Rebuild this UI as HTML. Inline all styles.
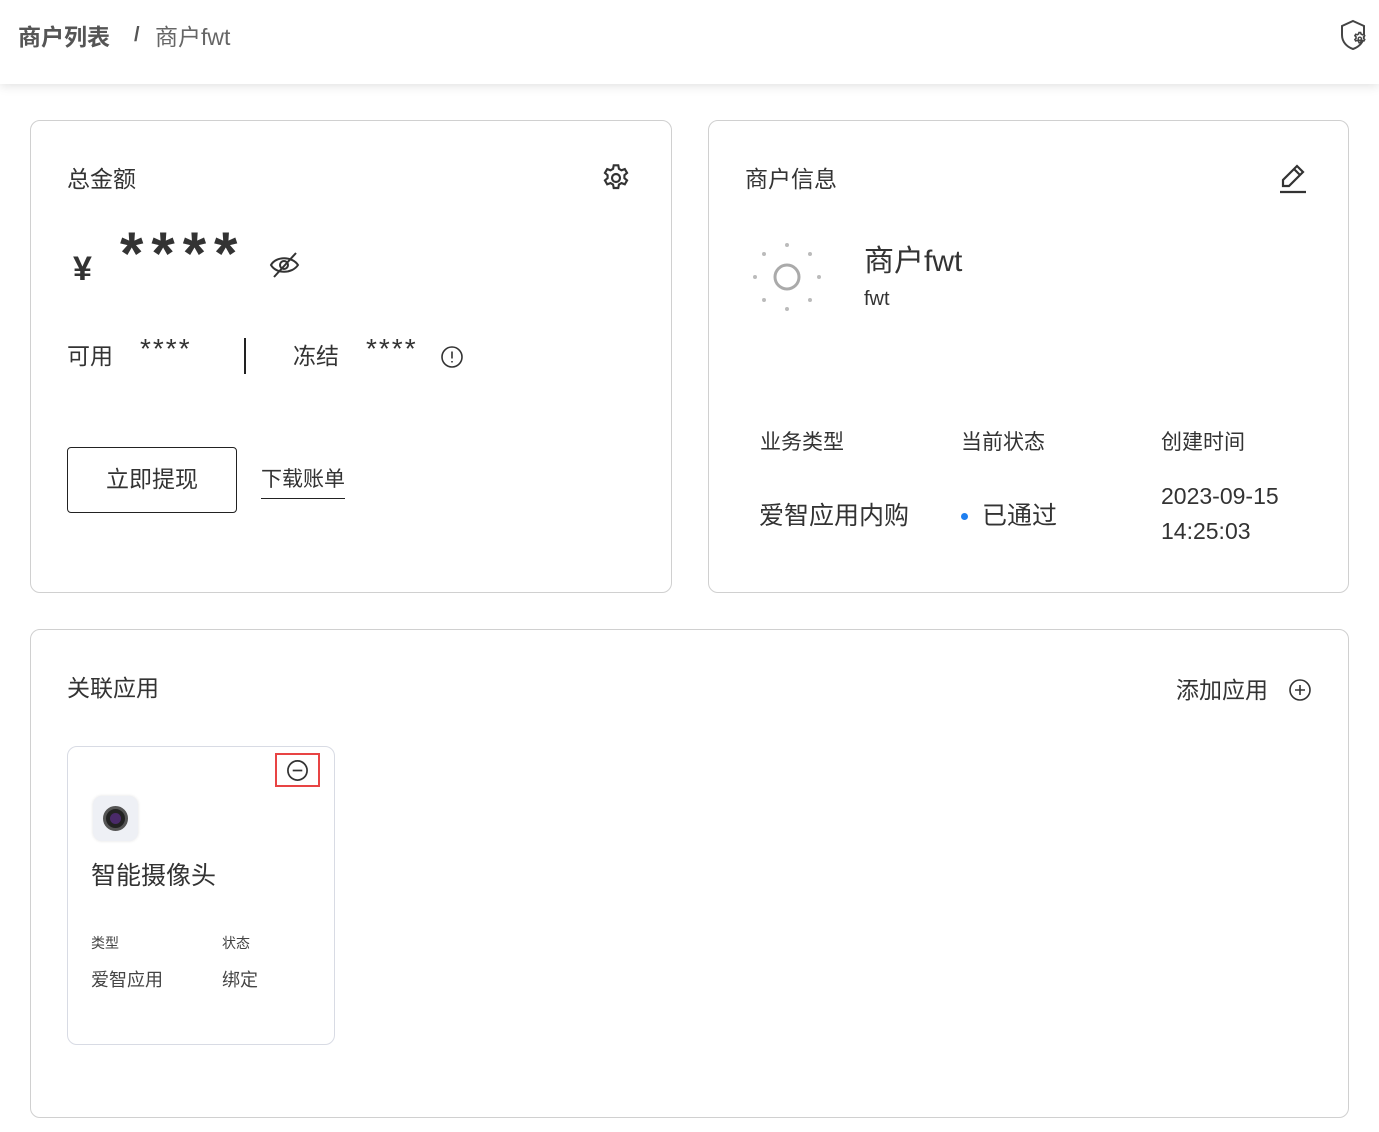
<!DOCTYPE html>
<html><head><meta charset="utf-8"><style>
*{margin:0;padding:0;box-sizing:border-box}
body{width:1379px;height:1132px;background:#fff;font-family:"Liberation Sans","Noto Sans CJK SC",sans-serif;color:#333;position:relative;overflow:hidden}
.a{position:absolute;white-space:nowrap}
.hdr{position:absolute;left:0;top:0;width:1379px;height:84px;background:#fff;box-shadow:0 2px 10px rgba(0,0,0,.12)}
.card{position:absolute;border:1px solid #d0d0d0;border-radius:10px;background:#fff}
</style></head><body>
<div class="hdr"></div>
<div class="a" style="left:18px;top:18px;font-size:23px;font-weight:bold;color:#555">商户列表</div>
<div class="a" style="left:134px;top:24px;font-size:20px;color:#555;font-weight:bold">/</div>
<div class="a" style="left:155px;top:18px;font-size:23px;color:#666">商户fwt</div>
<svg class="a" style="left:1340px;top:19px" width="32" height="34" viewBox="0 0 32 34" fill="none" stroke="#444" stroke-width="2"><path d="M13 2 L24 7 V16 C24 23 19 28 13 30 C7 28 2 23 2 16 V7 Z"/><path d="M19 13.5l1.6 0 .4 1.5 1.4.8 1.5-.5.8 1.4-1.1 1.1v1.6l1.1 1.1-.8 1.4-1.5-.5-1.4.8-.4 1.5h-1.6l-.4-1.5-1.4-.8-1.5.5-.8-1.4 1.1-1.1v-1.6l-1.1-1.1.8-1.4 1.5.5 1.4-.8z" fill="#fff" stroke-width="1.6"/><circle cx="19.8" cy="19.8" r="1.6" stroke-width="1.4"/></svg>

<div class="card" style="left:30px;top:120px;width:642px;height:473px"></div>
<div class="a" style="left:67px;top:160px;font-size:23px">总金额</div>
<svg class="a" style="left:600px;top:162px" width="32" height="32" viewBox="0 0 24 24" fill="none" stroke="#333" stroke-width="1.6"><path d="M10.3 2.5h3.4l.5 2.6 1.9 1.1 2.5-.9 1.7 2.9-2 1.7v2.2l2 1.7-1.7 2.9-2.5-.9-1.9 1.1-.5 2.6h-3.4l-.5-2.6-1.9-1.1-2.5.9-1.7-2.9 2-1.7v-2.2l-2-1.7 1.7-2.9 2.5.9 1.9-1.1z"/><circle cx="12" cy="12" r="3"/></svg>
<div class="a" style="left:73px;top:250px;font-size:34px;font-weight:bold">¥</div>
<div class="a" style="left:120px;top:219px;font-size:60px;font-weight:bold;letter-spacing:8px">****</div>
<svg class="a" style="left:268px;top:250px" width="34" height="30" viewBox="0 0 34 30" fill="none" stroke="#333" stroke-width="2"><path d="M3 15 C8 6 24 6 30 15 C24 24 8 24 3 15Z"/><circle cx="16" cy="15" r="4"/><path d="M6 27 L28 3"/></svg>
<div class="a" style="left:67px;top:337px;font-size:23px">可用</div>
<div class="a" style="left:140px;top:333px;font-size:28px;letter-spacing:2px">****</div>
<div class="a" style="left:244px;top:338px;width:2px;height:36px;background:#222"></div>
<div class="a" style="left:293px;top:337px;font-size:23px">冻结</div>
<div class="a" style="left:366px;top:333px;font-size:28px;letter-spacing:2px">****</div>
<svg class="a" style="left:440px;top:345px" width="24" height="24" viewBox="0 0 24 24" fill="none" stroke="#333" stroke-width="1.6"><circle cx="12" cy="12" r="10"/><path d="M12 6.5v7M12 16v1.5"/></svg>
<div class="a" style="left:67px;top:447px;width:170px;height:66px;border:1px solid #222;border-radius:4px;font-size:23px;line-height:62px;text-align:center">立即提现</div>
<div class="a" style="left:261px;top:463px;font-size:21px;border-bottom:1px solid #222;padding-bottom:5px">下载账单</div>

<div class="card" style="left:708px;top:120px;width:641px;height:473px"></div>
<div class="a" style="left:745px;top:160px;font-size:23px">商户信息</div>
<svg class="a" style="left:1278px;top:161px" width="30" height="34" viewBox="0 0 30 34" fill="none" stroke="#333" stroke-width="2.2"><path d="M5 25 L5 19 L19 5 L25 11 L11 25 Z M16 8 L22 14"/><path d="M2 31 H28"/></svg>
<svg class="a" style="left:750px;top:240px" width="74" height="74" viewBox="0 0 74 74"><g fill="#bbb"><circle cx="37" cy="5" r="2"/><circle cx="37" cy="69" r="2"/><circle cx="5" cy="37" r="2"/><circle cx="69" cy="37" r="2"/><circle cx="14" cy="14" r="2"/><circle cx="60" cy="14" r="2"/><circle cx="14" cy="60" r="2"/><circle cx="60" cy="60" r="2"/></g><circle cx="37" cy="37" r="12" fill="none" stroke="#aaa" stroke-width="3"/></svg>
<div class="a" style="left:864px;top:236px;font-size:30px">商户fwt</div>
<div class="a" style="left:864px;top:288px;font-size:20px">fwt</div>
<div class="a" style="left:760px;top:426px;font-size:21px">业务类型</div>
<div class="a" style="left:961px;top:426px;font-size:21px">当前状态</div>
<div class="a" style="left:1161px;top:426px;font-size:21px">创建时间</div>
<div class="a" style="left:759px;top:496px;font-size:25px">爱智应用内购</div>
<div class="a" style="left:961px;top:513px;width:7px;height:7px;border-radius:50%;background:#1e7ff0"></div>
<div class="a" style="left:982px;top:496px;font-size:25px">已通过</div>
<div class="a" style="left:1161px;top:479px;font-size:23px;line-height:35px">2023-09-15<br>14:25:03</div>

<div class="card" style="left:30px;top:629px;width:1319px;height:489px"></div>
<div class="a" style="left:67px;top:669px;font-size:23px">关联应用</div>
<div class="a" style="left:1176px;top:671px;font-size:23px">添加应用</div>
<svg class="a" style="left:1288px;top:678px" width="24" height="24" viewBox="0 0 24 24" fill="none" stroke="#333" stroke-width="1.6"><circle cx="12" cy="12" r="10"/><path d="M7 12h10M12 7v10"/></svg>
<div class="a" style="left:67px;top:746px;width:268px;height:299px;border:1px solid #d8dbe4;border-radius:10px"></div>
<div class="a" style="left:275px;top:753px;width:45px;height:34px;border:2px solid #e84444"></div>
<svg class="a" style="left:286px;top:759px" width="23" height="23" viewBox="0 0 24 24" fill="none" stroke="#333" stroke-width="1.8"><circle cx="12" cy="12" r="10"/><path d="M7 12h10"/></svg>
<div class="a" style="left:93px;top:796px;width:45px;height:45px;border-radius:9px;background:#eef0f5;box-shadow:0 0 3px rgba(0,0,0,.12)"></div>
<div class="a" style="left:103px;top:806px;width:25px;height:25px;border-radius:50%;background:#222;border:3px solid #555"></div>
<div class="a" style="left:110px;top:813px;width:11px;height:11px;border-radius:50%;background:#4a2a6a"></div>
<div class="a" style="left:91px;top:856px;font-size:25px">智能摄像头</div>
<div class="a" style="left:91px;top:933px;font-size:14px;color:#444">类型</div>
<div class="a" style="left:222px;top:933px;font-size:14px;color:#444">状态</div>
<div class="a" style="left:91px;top:966px;font-size:18px;color:#444">爱智应用</div>
<div class="a" style="left:222px;top:966px;font-size:18px;color:#444">绑定</div>
</body></html>
